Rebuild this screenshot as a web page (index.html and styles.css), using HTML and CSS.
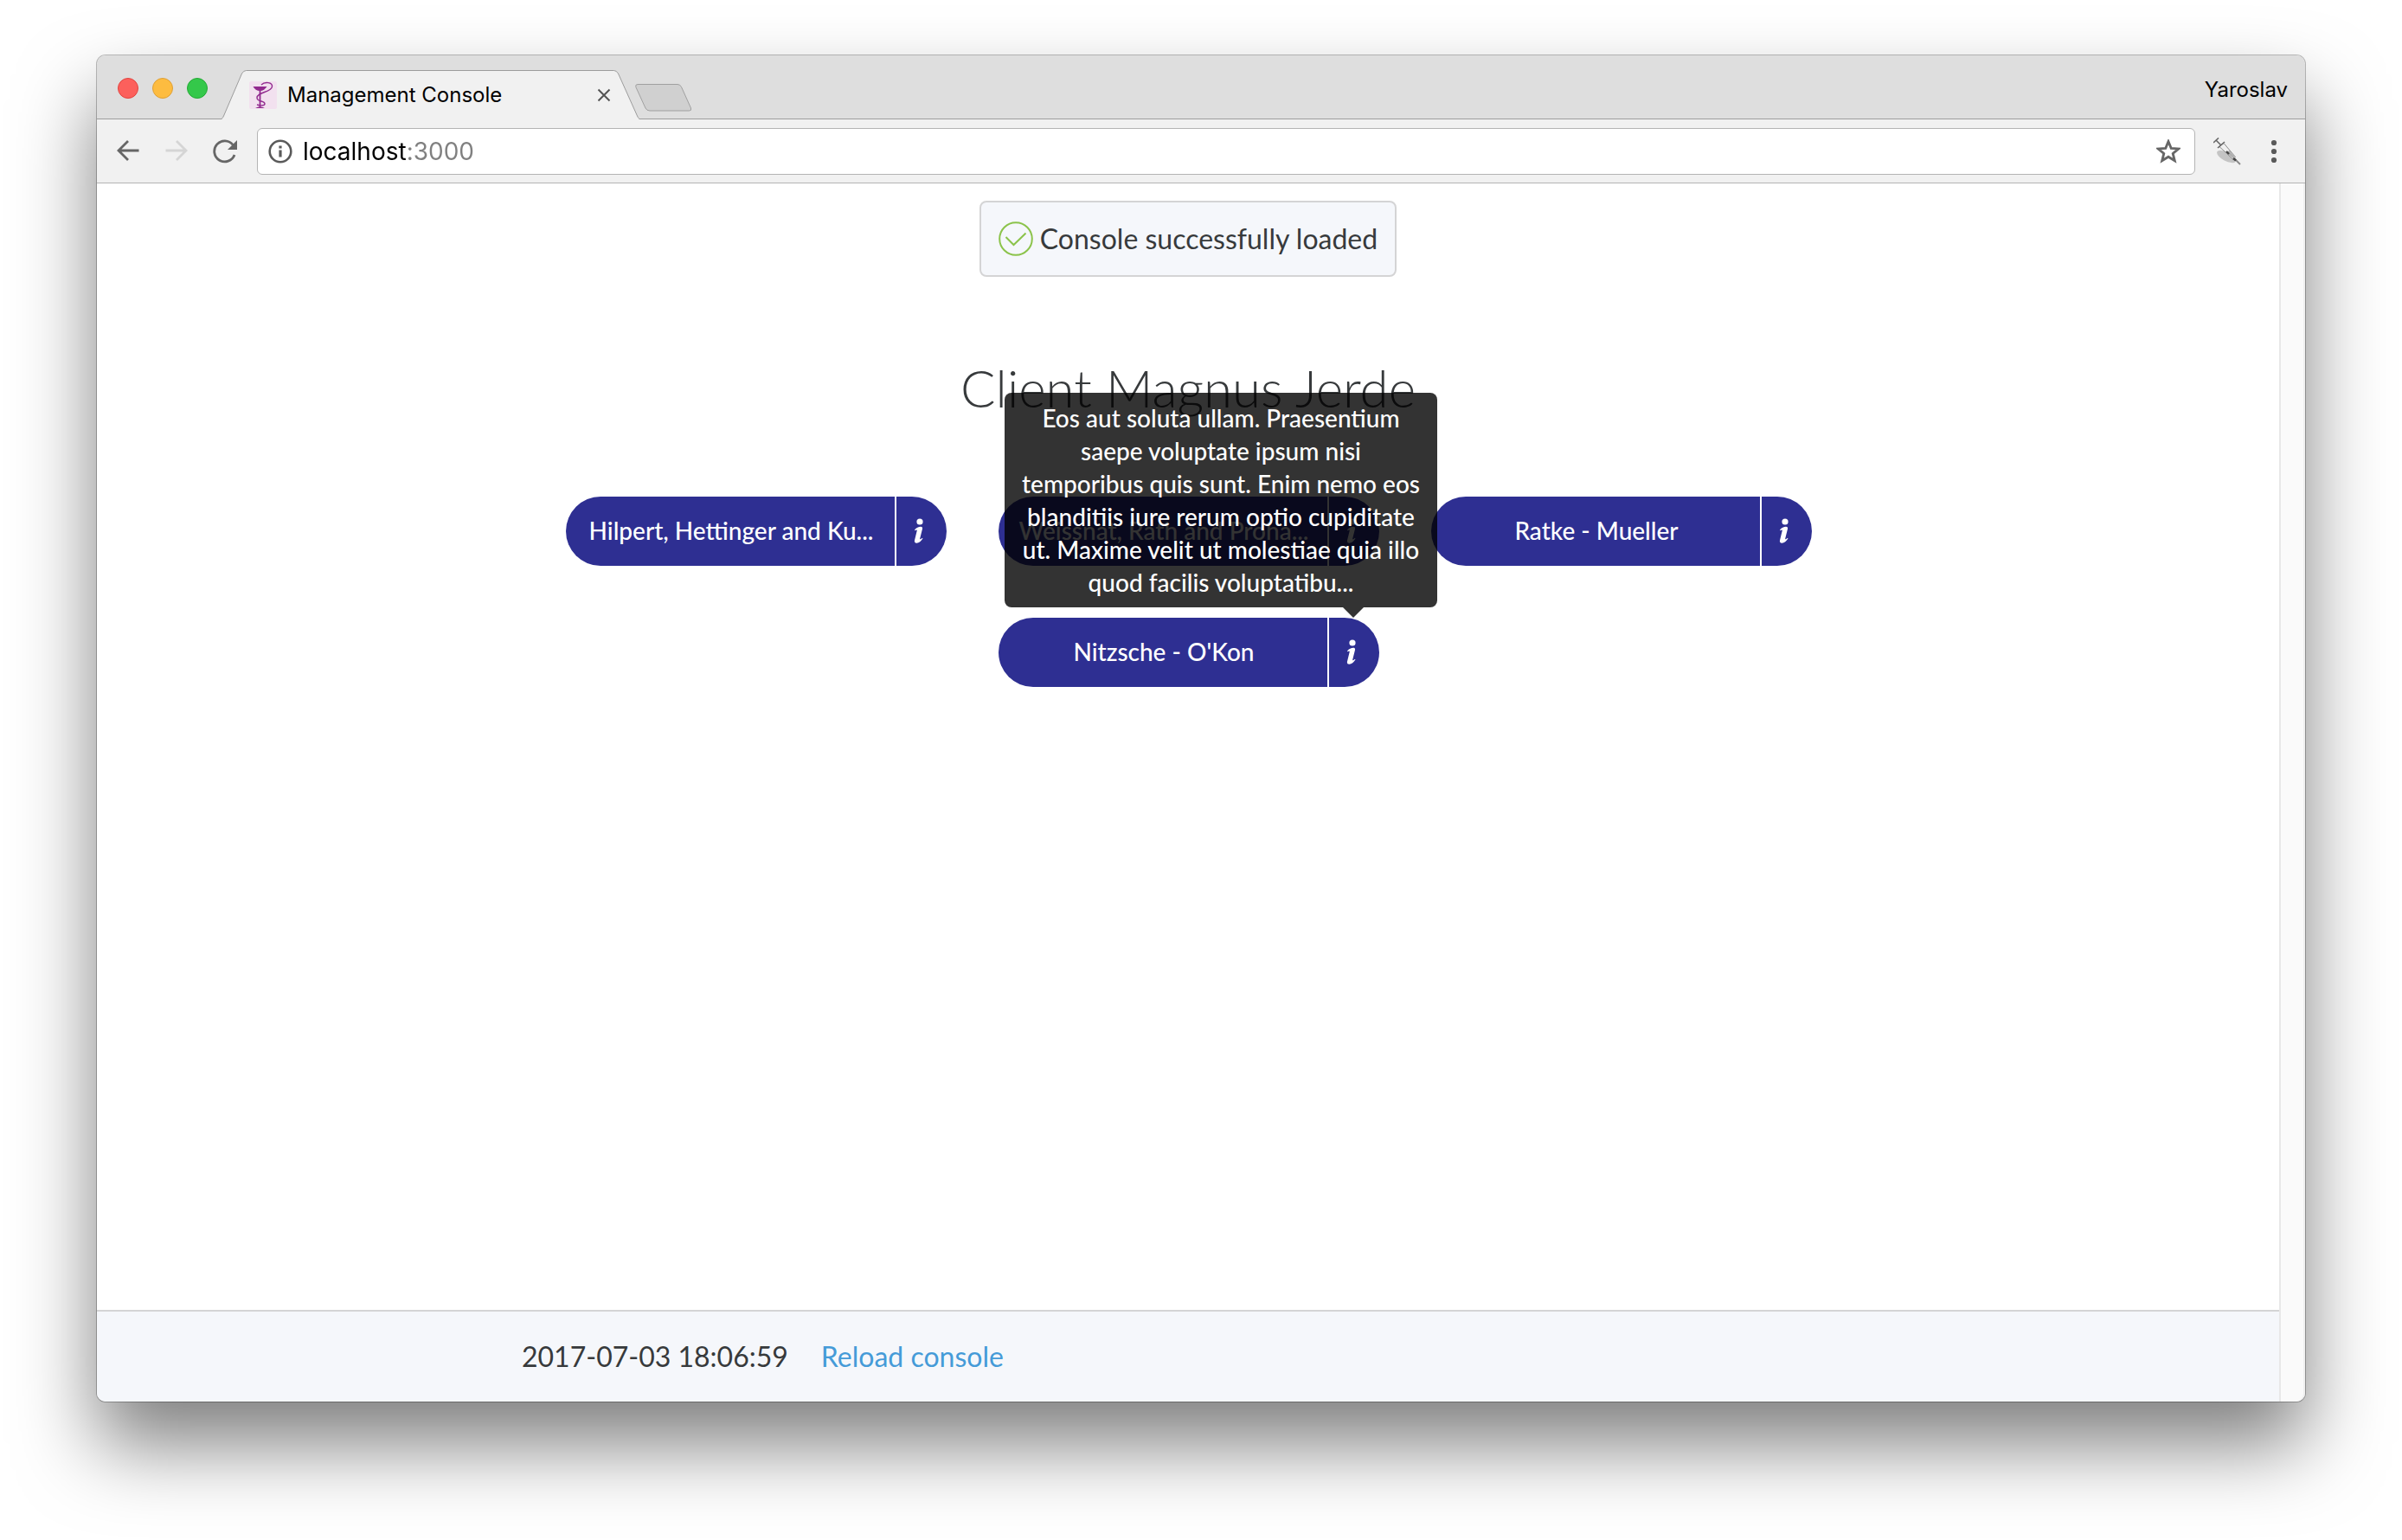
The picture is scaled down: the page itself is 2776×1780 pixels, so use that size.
FILE: index.html
```html
<!DOCTYPE html>
<html lang="en">
<head>
<meta charset="utf-8">
<title>Management Console</title>
<link rel="stylesheet" href="styles.css">
</head>
<body>
<svg class="sprite" aria-hidden="true">
  <symbol id="info" viewBox="0 0 12 30">
    <circle cx="7" cy="4" r="3.6"/>
    <path d="M1 13.4C3 11 5.600 9.800 8 9.800C9.800 9.800 10.300 10.800 10 12.200L7.200 23.400C7 24.400 7.600 24.400 8.300 23.900L10 22.800L10.400 23.600C8.600 26.400 6 28.800 3.400 28.800C1.300 28.800 .6 27.400 1 25.600L3.700 14.600C3.900 13.600 3.300 13.300 2.600 13.700L1.500 14.300Z"/>
  </symbol>
</svg>
<div class="window">
  <header class="titlebar">
    <div class="lights">
      <button class="light light-close" aria-label="Close window"></button>
      <button class="light light-min" aria-label="Minimize window"></button>
      <button class="light light-max" aria-label="Zoom window"></button>
    </div>
    <div class="tab">
      <svg class="tab-shape" viewBox="0 0 484 57" aria-hidden="true">
        <path d="M0 57C2 56 2 55 3 53L24 4Q26 .5 29 .5H454Q457 .5 459 4L481 53C482 55 482 56 484 57Z" fill="#f1f1f1"/>
        <path d="M0 56.500C1.500 56 2 55 3 53L24 4Q26 .5 29 .5H454Q457 .5 459 4L481 53C482 55 482.500 56 484 56.500" fill="none" stroke="#9c9c9c"/>
      </svg>
      <svg class="favicon" viewBox="0 0 32 32" aria-hidden="true">
        <rect width="32" height="32" rx="2" fill="#f2e1ef"/>
        <g fill="none" stroke="#922a8f" stroke-width="1.400">
          <path d="M14 4C18 0 27 1 26.500 6C26 13 9 12 9 19C9 24 18 22 18 26C18 28 14 28.500 9 27"/>
          <path d="M12.500 9V30" stroke-width="1.800"/>
        </g>
        <path d="M4.500 6H20.500C18.500 9 16 11 12.500 11C9 11 6 9 4.500 6ZM7 31Q12.500 27.500 18 31Z" fill="#922a8f"/>
      </svg>
      <span class="tab-title">Management Console</span>
      <button class="tab-close" aria-label="Close tab">
        <svg viewBox="0 0 16 16"><path d="M1.500 1.500L14.500 14.500M14.500 1.500L1.500 14.500" stroke="#555" stroke-width="2" fill="none"/></svg>
      </button>
    </div>
    <button class="new-tab" aria-label="New tab">
      <svg viewBox="0 0 66 32"><path d="M3 .5H49Q52 .5 53.500 3.500L64.500 28Q65.500 31 62.500 31H17Q13.500 31 12 28L.8 3.500Q0 .5 3 .5Z" fill="#d0d0d0" stroke="#a0a0a0"/></svg>
    </button>
    <span class="profile">Yaroslav</span>
  </header>

  <nav class="toolbar">
    <button class="tool" aria-label="Back">
      <svg viewBox="0 0 28 28"><path d="M26.500 13H3M14 2L3 13L14 24" fill="none" stroke="#666" stroke-width="2.800"/></svg>
    </button>
    <button class="tool" aria-label="Forward" disabled>
      <svg viewBox="0 0 28 28"><path d="M1.500 13H25M14 2L25 13L14 24" fill="none" stroke="#d5d5d5" stroke-width="2.800"/></svg>
    </button>
    <button class="tool" aria-label="Reload">
      <svg viewBox="0 0 28 28"><path d="M23.200 6.500A12 12 0 1 0 25 18" fill="none" stroke="#666" stroke-width="2.800"/><path d="M28 1V12H17Z" fill="#666"/></svg>
    </button>
    <div class="address">
      <svg class="address-info" viewBox="0 0 28 28" aria-hidden="true"><circle cx="14" cy="14" r="12.300" fill="none" stroke="#5a5a5a" stroke-width="2.600"/><path d="M12.400 7.500H15.600V10.500H12.400ZM12.400 12.500H15.600V20.500H12.400Z" fill="#5a5a5a"/></svg>
      <input class="url" type="text" aria-label="Address" value="localhost:3000">
      <button class="tool" aria-label="Bookmark">
        <svg viewBox="0 0 28 28"><path d="M14 2.500L17.200 10.300L25.800 10.900L19.200 16.400L21.300 24.800L14 20.200L6.700 24.800L8.800 16.400L2.200 10.900L10.800 10.300Z" fill="none" stroke="#666" stroke-width="2.800"/></svg>
      </button>
    </div>
    <button class="extension" aria-label="Extension">
      <svg viewBox="0 0 32 32">
        <ellipse cx="15" cy="22" rx="12" ry="5" transform="rotate(28 15 22)" fill="#c4c4c4"/>
        <path d="M7 10.500L12 6.500L25.500 22.500L22.500 25Z" fill="#f0f0f0" stroke="#8a8a8a"/>
        <path d="M3 3L9 9M0 6L6 .5M5 12L13 5" stroke="#666" stroke-width="1.600" fill="none"/>
        <path d="M14 17.500L18.500 15L24.500 22L23 24Z" fill="#b0b0b0"/>
        <path d="M24 24L31 31" stroke="#888" stroke-width="1.800"/>
        <path d="M15 16L18 19M23 24L26 26.500" stroke="#444" stroke-width="2.400"/>
      </svg>
    </button>
    <button class="menu" aria-label="Menu">
      <svg viewBox="0 0 20 28"><g fill="#5a5a5a"><circle cx="10" cy="4" r="3.100"/><circle cx="10" cy="14" r="3.100"/><circle cx="10" cy="24" r="3.100"/></g></svg>
    </button>
  </nav>

  <div class="viewport">
    <div class="page">
      <main class="content">
        <div class="alert" role="status">
          <svg class="alert-icon" viewBox="0 0 40 40" aria-hidden="true"><circle cx="20" cy="20" r="18.800" fill="none" stroke="#8bc34a" stroke-width="2"/><path d="M8.500 18L17.500 27L31.500 13.500" fill="none" stroke="#8bc34a" stroke-width="2"/></svg>
          <span>Console successfully loaded</span>
        </div>
        <h1 class="client">Client Magnus Jerde</h1>
        <div class="buttons">
          <div class="pill">
            <button class="pill-name">Hilpert, Hettinger and Ku...</button>
            <button class="pill-info" aria-label="About Hilpert, Hettinger"><svg><use href="#info"/></svg></button>
          </div>
          <div class="pill">
            <button class="pill-name">Weissnat, Rath and Proha...</button>
            <button class="pill-info" aria-label="About Weissnat, Rath"><svg><use href="#info"/></svg></button>
          </div>
          <div class="pill">
            <button class="pill-name">Ratke - Mueller</button>
            <button class="pill-info" aria-label="About Ratke - Mueller"><svg><use href="#info"/></svg></button>
          </div>
          <div class="pill">
            <button class="pill-name">Nitzsche - O'Kon</button>
            <button class="pill-info" aria-label="About Nitzsche - O'Kon" aria-describedby="tip"><svg><use href="#info"/></svg></button>
            <div class="tooltip" id="tip" role="tooltip">Eos aut soluta ullam. Praesentium saepe voluptate ipsum nisi temporibus quis sunt. Enim nemo eos blanditiis iure rerum optio cupiditate ut. Maxime velit ut molestiae quia illo quod facilis voluptatibu...</div>
          </div>
        </div>
      </main>
      <footer class="footer">
        <div class="footer-inner">
          <time datetime="2017-07-03T18:06:59">2017-07-03 18:06:59</time>
          <a class="reload" href="#">Reload console</a>
        </div>
      </footer>
    </div>
    <div class="scrollbar" aria-hidden="true"></div>
  </div>
</div>
</body>
</html>
```

FILE: styles.css
```css
* {
  box-sizing: border-box;
}

body {
  margin: 0;
  min-height: 100vh;
  display: flex;
  padding: 64px 112px 160px;
  background: #fff;
  color: #373a3c;
  font: 32px/44px Lato, sans-serif;
}

button {
  margin: 0;
  padding: 0;
  border: 0;
  background: none;
  color: inherit;
  font: inherit;
}

svg {
  display: block;
}

.sprite {
  position: absolute;
  width: 0;
  height: 0;
}

.window {
  flex: 1;
  min-width: 0;
  display: flex;
  flex-direction: column;
  border-radius: 10px;
  background: #fff;
  box-shadow: 0 0 0 1px rgba(0, 0, 0, .26), 0 50px 90px rgba(0, 0, 0, .5);
}

/* Title bar */
.titlebar {
  display: flex;
  align-items: flex-end;
  height: 74px;
  padding-right: 20px;
  border-radius: 10px 10px 0 0;
  background: #dedede;
  box-shadow: inset 0 -1px #9c9c9c;
  color: #000;
}

.lights {
  display: flex;
  gap: 16px;
  width: 143px;
  padding: 0 0 24px 24px;
}

.light {
  width: 24px;
  height: 24px;
  border: 1px solid #e2443f;
  border-radius: 50%;
  background: #fc605c;
}

.light-min {
  border-color: #dea036;
  background: #fdbc40;
}

.light-max {
  border-color: #24aa35;
  background: #34c84a;
}

.tab {
  position: relative;
  display: flex;
  align-items: center;
  width: 485px;
  height: 57px;
  padding: 0 34px 0 33px;
}

.tab-shape {
  position: absolute;
  inset: 0;
  width: 100%;
  height: 100%;
}

.favicon {
  position: relative;
  width: 32px;
  height: 32px;
}

.tab-title {
  position: relative;
  flex: 1;
  padding-left: 12px;
  font: 24px/32px Inter, sans-serif;
}

.tab-close {
  position: relative;
  width: 16px;
  height: 16px;
}

.new-tab {
  width: 66px;
  height: 32px;
  margin: 0 auto 9px -6px;
}

.profile {
  padding-bottom: 18px;
  font: 24px/32px Inter, sans-serif;
}

/* Toolbar */
.toolbar {
  display: flex;
  align-items: center;
  gap: 28px;
  height: 74px;
  padding: 0 26px 0 22px;
  border-bottom: 1px solid #b4b4b4;
  background: #f1f1f1;
}

.tool {
  flex: none;
  width: 28px;
  height: 28px;
}

.address {
  flex: 1;
  display: flex;
  align-items: center;
  gap: 12px;
  height: 54px;
  margin: 0 -7px 0 -5px;
  padding: 0 16px 0 12px;
  border: 1px solid #b4b4b4;
  border-radius: 6px;
  background: #fff;
}

.address-info {
  flex: none;
  width: 28px;
  height: 28px;
}

.url {
  flex: 1;
  min-width: 0;
  padding: 0;
  border: 0;
  outline: 0;
  background: linear-gradient(90deg, #000 120px, #808080 120px);
  -webkit-background-clip: text;
  background-clip: text;
  color: transparent;
  font: 28px/40px Inter, sans-serif;
}

.extension {
  width: 32px;
  height: 32px;
}

.menu {
  width: 20px;
  height: 28px;
}

/* Page */
.viewport {
  flex: 1;
  display: flex;
}

.page {
  flex: 1;
  display: flex;
  flex-direction: column;
}

.scrollbar {
  width: 30px;
  border: solid #e8e8e8;
  border-width: 0 2px;
  border-right-color: #f0f0f0;
  border-radius: 0 0 10px 0;
  background: #fafafa;
}

.content {
  flex: 1;
  display: flex;
  flex-direction: column;
  align-items: center;
  padding-top: 20px;
}

.alert {
  display: flex;
  gap: 8px;
  padding: 20px;
  border: 2px solid #d4d4d5;
  border-radius: 8px;
  background: #f5f7fb;
}

.alert-icon {
  width: 40px;
  height: 40px;
  margin: 2px 0;
}

.client {
  margin: 88px 0 86px;
  font-size: 60px;
  line-height: 80px;
  font-weight: 300;
}

.buttons {
  display: flex;
  flex-wrap: wrap;
  justify-content: center;
  gap: 60px;
  max-width: 1600px;
  padding-left: 2px;
}

.pill {
  position: relative;
  display: flex;
  gap: 2px;
  width: 440px;
  height: 80px;
  color: #fff;
  font-size: 28px;
  font-weight: 500;
}

.pill-name {
  flex: 1;
  padding: 0 0 2px 2px;
  border-radius: 40px 0 0 40px;
  background: #2e2f92;
}

.pill-info {
  width: 58px;
  padding-left: 20px;
  border-radius: 0 40px 40px 0;
  background: #2e2f92;
}

.pill-info svg {
  width: 12px;
  height: 30px;
  fill: #fff;
}

.tooltip {
  position: absolute;
  right: -67px;
  bottom: 92px;
  width: 500px;
  padding: 10px 20px;
  border-radius: 8px;
  background: rgba(0, 0, 0, .8);
  line-height: 38px;
  text-align: center;
}

.tooltip::after {
  content: "";
  position: absolute;
  top: 100%;
  right: 85px;
  border: 12px solid transparent;
  border-top-color: rgba(0, 0, 0, .8);
  border-bottom: 0;
}

/* Footer */
.footer {
  border-top: 2px solid #d4d4d5;
  border-radius: 0 0 0 10px;
  background: #f5f7fb;
}

.footer-inner {
  display: flex;
  gap: 38px;
  max-width: 1600px;
  margin: 0 auto;
  padding: 30px;
}

.reload {
  color: #459bd8;
  text-decoration: none;
}
```
